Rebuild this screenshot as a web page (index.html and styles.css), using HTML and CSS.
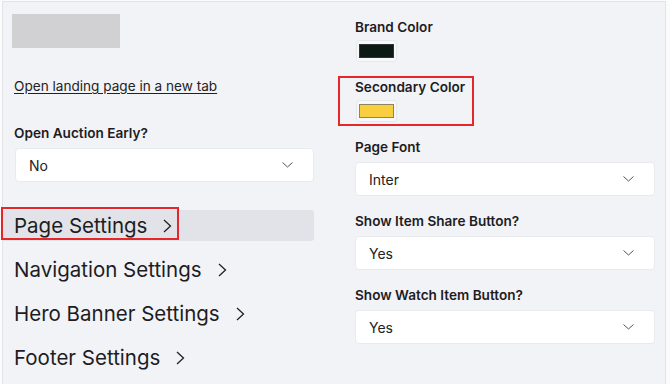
FILE: index.html
```html
<!DOCTYPE html>
<html lang="en">
<head>
  <meta charset="UTF-8" />
  <meta name="viewport" content="width=device-width, initial-scale=1" />
  <title>Landing Page Settings</title>
  <link rel="stylesheet" href="styles.css">
</head>
<body>
  <div class="panel">
    <div class="col-left">
      <div class="logo-placeholder"></div>
      <a class="open-link" href="#">Open landing page in a new tab</a>

      <div class="field">
        <label class="field-label">Open Auction Early?</label>
        <div class="select">
          <span>No</span>
          <svg class="caret" width="11" height="6" viewBox="0 0 11 6"><path d="M0.5 0.5 L5.5 5 L10.5 0.5" fill="none" stroke="#555" stroke-width="1"/></svg>
        </div>
      </div>

      <ul class="nav">
        <li class="nav-item active">
          <span>Page Settings</span>
          <svg class="nav-arrow" width="10" height="14" viewBox="0 0 10 14"><path d="M2 1 L8.5 7 L2 13" fill="none" stroke="#222" stroke-width="1.3"/></svg>
          <span class="callout nav-callout"></span>
        </li>
        <li class="nav-item">
          <span>Navigation Settings</span>
          <svg class="nav-arrow" width="10" height="14" viewBox="0 0 10 14"><path d="M2 1 L8.5 7 L2 13" fill="none" stroke="#222" stroke-width="1.3"/></svg>
        </li>
        <li class="nav-item">
          <span>Hero Banner Settings</span>
          <svg class="nav-arrow" width="10" height="14" viewBox="0 0 10 14"><path d="M2 1 L8.5 7 L2 13" fill="none" stroke="#222" stroke-width="1.3"/></svg>
        </li>
        <li class="nav-item">
          <span>Footer Settings</span>
          <svg class="nav-arrow" width="10" height="14" viewBox="0 0 10 14"><path d="M2 1 L8.5 7 L2 13" fill="none" stroke="#222" stroke-width="1.3"/></svg>
        </li>
      </ul>
    </div>

    <div class="col-right">
      <div class="field">
        <label class="field-label swatch-label">Brand Color</label>
        <div class="swatch"><span class="swatch-color brand"></span></div>
      </div>

      <div class="field highlighted">
        <label class="field-label swatch-label">Secondary Color</label>
        <div class="swatch"><span class="swatch-color secondary"></span></div>
        <span class="callout field-callout"></span>
      </div>

      <div class="field">
        <label class="field-label">Page Font</label>
        <div class="select">
          <span>Inter</span>
          <svg class="caret" width="11" height="6" viewBox="0 0 11 6"><path d="M0.5 0.5 L5.5 5 L10.5 0.5" fill="none" stroke="#555" stroke-width="1"/></svg>
        </div>
      </div>

      <div class="field">
        <label class="field-label">Show Item Share Button?</label>
        <div class="select">
          <span>Yes</span>
          <svg class="caret" width="11" height="6" viewBox="0 0 11 6"><path d="M0.5 0.5 L5.5 5 L10.5 0.5" fill="none" stroke="#555" stroke-width="1"/></svg>
        </div>
      </div>

      <div class="field">
        <label class="field-label">Show Watch Item Button?</label>
        <div class="select">
          <span>Yes</span>
          <svg class="caret" width="11" height="6" viewBox="0 0 11 6"><path d="M0.5 0.5 L5.5 5 L10.5 0.5" fill="none" stroke="#555" stroke-width="1"/></svg>
        </div>
      </div>
    </div>
  </div>
</body>
</html>
```

FILE: styles.css
```css
body {
  margin: 0;
  font-family: Inter, 'Noto Sans', sans-serif;
  background-color: #fbfbfc;
  color: #1d1d1f;
  overflow: hidden;
}
.panel {
  margin: 1px 0 0 2px;
  width: 664px;
  height: 400px;
  box-sizing: border-box;
  display: grid;
  grid-template-columns: 300px 300px;
  column-gap: 41px;
  padding: 12px 9px 0 11px;
  background: #f2f3f7;
  border: 1px solid #e2e4e8;
  border-bottom: none;
}
.col-left,
.col-right {
  display: flex;
  flex-direction: column;
}
.col-right {
  padding-top: 5px;
  gap: 17px;
}
.logo-placeholder {
  width: 108px;
  height: 34px;
  margin-left: -2px;
  background: #d1d1d3;
}
.open-link {
  display: block;
  margin-top: 30px;
  font-size: 13.6px;
  line-height: 16px;
  color: #222;
  text-decoration: underline;
  text-underline-offset: 2px;
}
.col-left .field {
  margin-top: 31px;
}
.field {
  position: relative;
  display: flex;
  flex-direction: column;
}
.field-label {
  font-size: 13.6px;
  line-height: 16px;
  font-weight: 600;
  color: #1d1d1f;
  margin-bottom: 7px;
}
.swatch-label {
  margin-bottom: 5px;
}
.select {
  height: 34px;
  box-sizing: border-box;
  display: flex;
  align-items: center;
  justify-content: space-between;
  padding: 0 20px 0 13px;
  background: #fff;
  border: 1px solid #e9eaee;
  border-radius: 4px;
  font-size: 14px;
  color: #222;
}
.col-left .select {
  margin-left: 1px;
}
.swatch {
  width: 41px;
  height: 22px;
  box-sizing: border-box;
  margin-left: 1px;
  padding: 3px 2px;
  background: #f7f8fa;
  border: 1px solid #e6e8ec;
  border-radius: 3px;
}
.swatch-color {
  display: block;
  height: 100%;
  box-sizing: border-box;
  border: 1px solid #7a7a7a;
}
.swatch-color.brand {
  background: #0c1a13;
  border-color: #30332f;
}
.swatch-color.secondary {
  background: #f9cf3f;
  border-color: #8c8461;
}
.nav {
  list-style: none;
  margin: 28px 0 0;
  padding: 0;
  display: flex;
  flex-direction: column;
  gap: 13px;
}
.nav-item {
  position: relative;
  height: 31px;
  display: flex;
  align-items: center;
  gap: 15px;
  margin-left: -12px;
  padding-left: 12px;
  font-size: 20.5px;
  color: #1d1d1f;
}
.nav-item.active {
  background: #e1e3e8;
  border-radius: 0 3px 3px 0;
}
.callout {
  position: absolute;
  box-sizing: border-box;
  border: 2px solid #e5262b;
  pointer-events: none;
}
.nav-callout {
  left: -1px;
  top: -3px;
  width: 178px;
  height: 33px;
}
.field-callout {
  left: -17px;
  top: -3px;
  width: 136px;
  height: 50px;
}
```
